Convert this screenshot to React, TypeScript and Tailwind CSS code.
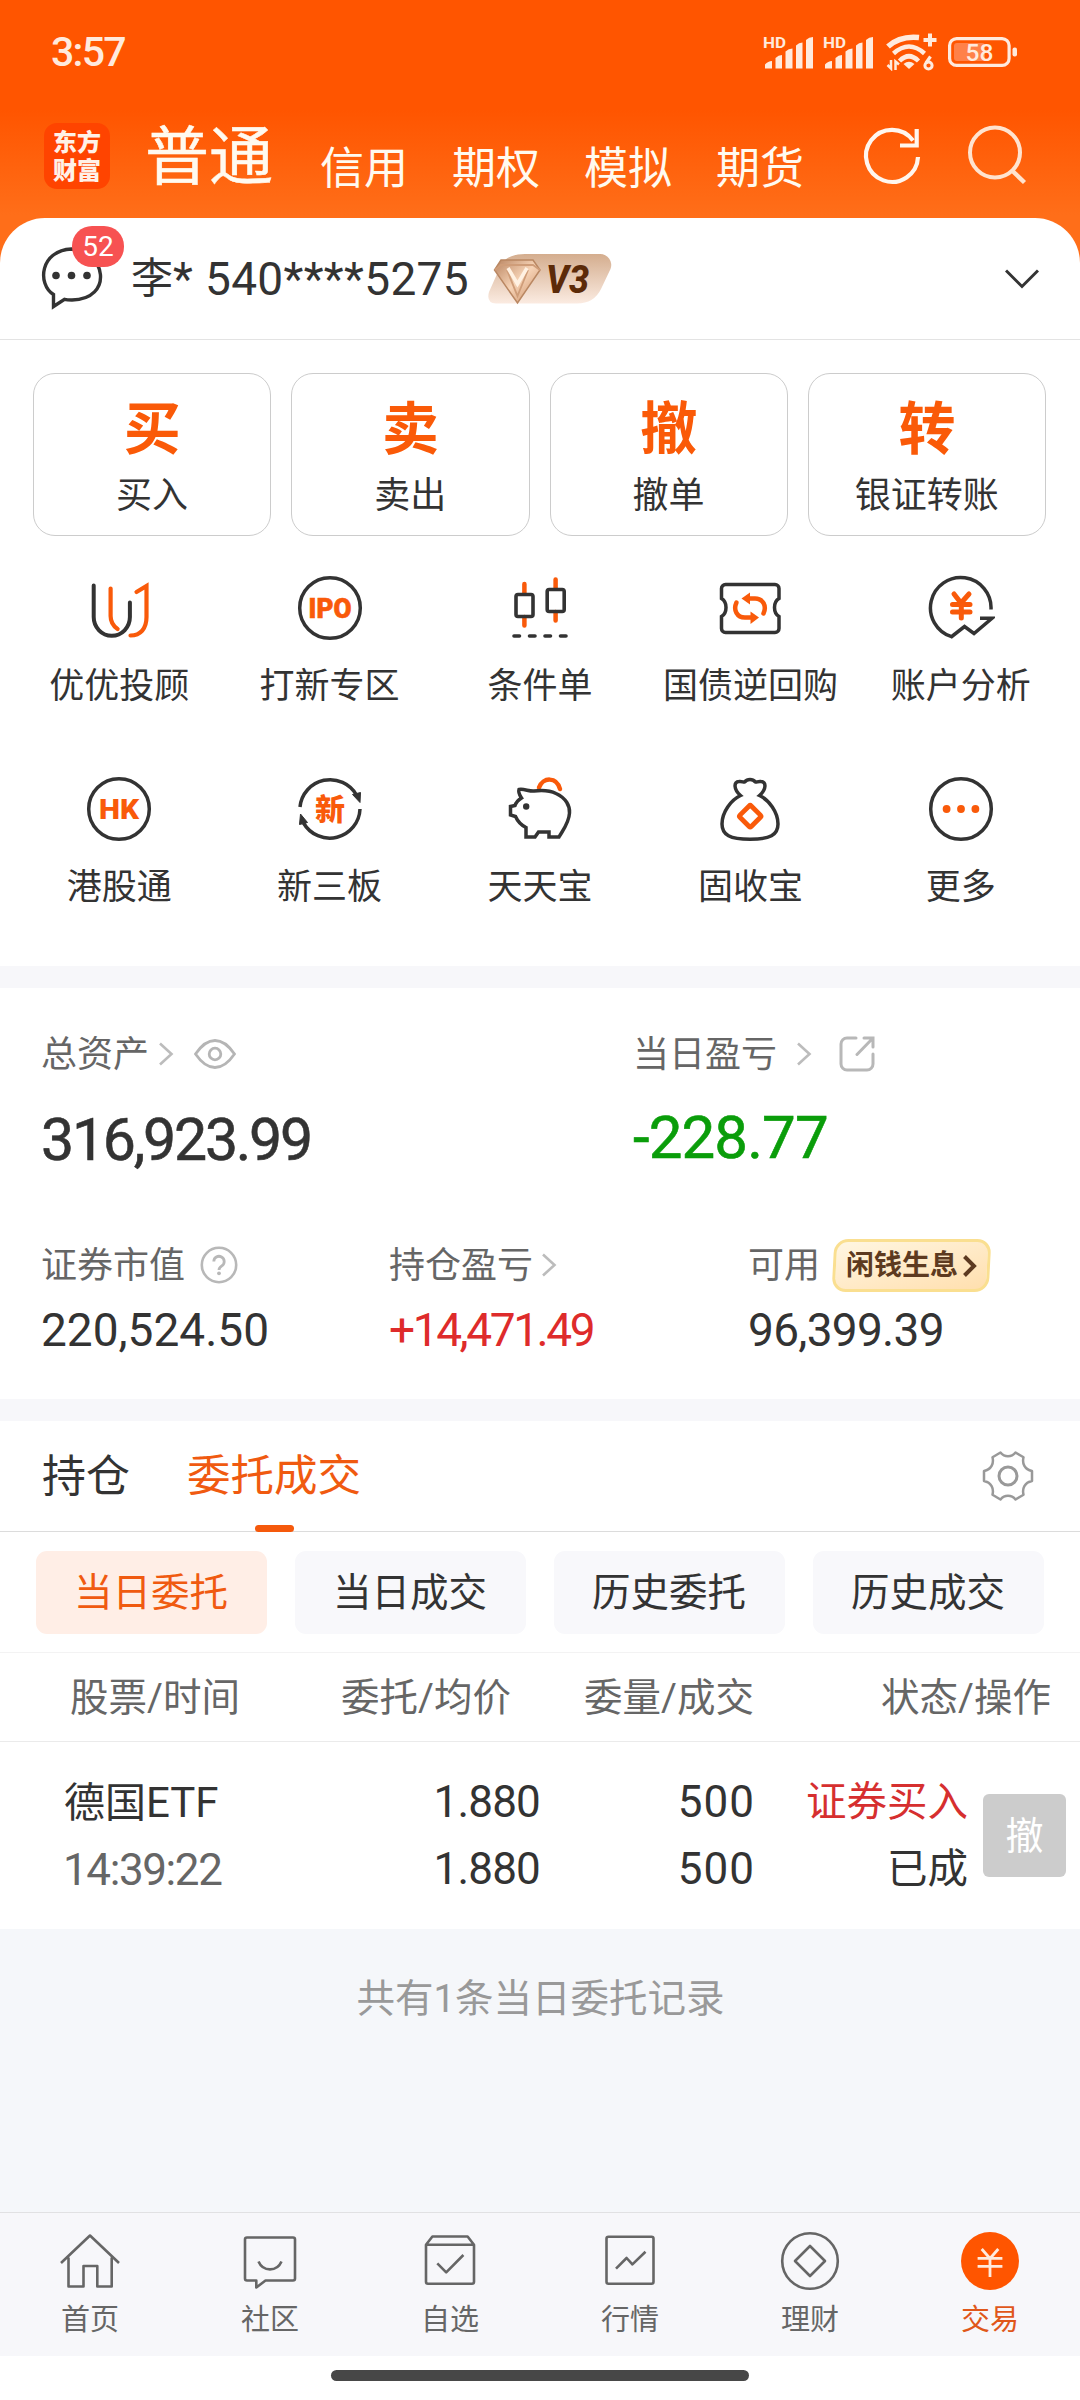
import React from 'react';

const DARK = '#333333';
const ORANGE = '#f95a0a';

/* ---------- status bar ---------- */

const Signal: React.FC = () => (
  <svg className="overflow-visible" width="52" height="38" viewBox="0 -4 52 38" fill="#ffeadd">
    <text x="0" y="12.500" fontSize="15" fontWeight="700" textLength="23" lengthAdjust="spacingAndGlyphs">HD</text>
    <path d="M2 33.500v-4q3-3.500 7-3.500v7.500z" />
    <path d="M12.500 33.500v-10.500q3-3 6.500-3v13.500z" />
    <path d="M22.500 33.500v-17q3-3 7-3v20z" />
    <path d="M33 33.500v-23q3-3 6.500-3v26z" />
    <path d="M43 33.500v-28.500q3-3 7-3v31.500z" />
  </svg>
);

const Wifi: React.FC = () => (
  <svg width="52" height="38" viewBox="0 0 52 38" fill="none" stroke="#ffeadd" strokeWidth="4.500">
    <path d="M2 13.500Q14 2.500 33 4.500" strokeWidth="5.500" />
    <path d="M7.500 20.500Q23 6.500 38.500 20.500" />
    <path d="M13.500 28Q23 18.500 32.500 28" />
    <path d="M17.500 31Q23 26.500 28.500 31L23 36z" fill="#ffeadd" stroke="none" />
    <path d="M44 0.500v13M37.500 7h13" strokeWidth="4" />
    <path d="M1.500 32l3.500 3.500v-8.500M9.500 37v-8.500l3.500 3" strokeWidth="2.500" />
    <path d="M44.500 23.500l-4.500 6.500" strokeWidth="3.200" />
    <circle cx="42.500" cy="32.500" r="3.600" strokeWidth="3" />
  </svg>
);

const Battery: React.FC = () => (
  <svg width="70" height="30" viewBox="0 0 70 30">
    <rect x="1.600" y="1.600" width="59.500" height="26.800" rx="7" fill="none" stroke="#ffeadd" strokeWidth="3.200" />
    <rect x="6" y="6" width="31" height="18" rx="3" fill="#ff8149" />
    <rect x="64.500" y="10.500" width="4.500" height="9" rx="2" fill="#ffeadd" />
    <text x="31.500" y="24" fontSize="24.500" fontWeight="500" textAnchor="middle" fill="#ffeadd">58</text>
  </svg>
);

/* ---------- small line icons ---------- */

const Chevron: React.FC<{ className?: string }> = ({ className }) => (
  <svg className={className} width="16" height="24" viewBox="0 0 16 24" fill="none" stroke="#bcbcbc" strokeWidth="2.600">
    <path d="M2 1.500L13.500 12L2 22.500" />
  </svg>
);

const Eye: React.FC = () => (
  <svg width="42" height="30" viewBox="0 0 42 30" fill="none" stroke="#b5b5b5" strokeWidth="2.800">
    <path d="M1.500 15C8 5.500 14 1.500 21 1.500S34 5.500 40.500 15C34 24.500 28 28.500 21 28.500S8 24.500 1.500 15z" />
    <circle cx="21" cy="15" r="5.800" />
  </svg>
);

const Share: React.FC = () => (
  <svg width="36" height="36" viewBox="0 0 36 36" fill="none" stroke="#b8b8b8" strokeWidth="3" strokeLinecap="round">
    <path d="M17 2H8a6 6 0 0 0-6 6v20a6 6 0 0 0 6 6h20a6 6 0 0 0 6-6V18" />
    <path d="M25 2h9v9M34 2L18 18.500" />
  </svg>
);

const Help: React.FC = () => (
  <svg width="38" height="38" viewBox="0 0 38 38" fill="none" stroke="#b8b8b8" strokeWidth="2.600">
    <circle cx="19" cy="19" r="17.200" />
    <path d="M13.800 15.500a5.200 5.200 0 1 1 8 4.400c-2 1.300-2.800 2.100-2.800 4" strokeWidth="2.800" />
    <circle cx="19" cy="27.300" r="1.900" fill="#b8b8b8" stroke="none" />
  </svg>
);

const Gear: React.FC = () => (
  <svg width="52" height="52" viewBox="0 0 52 52" fill="none" stroke="#999999" strokeWidth="2.500" strokeLinejoin="round">
    <path d="M18.500 2.500C22.500 7.500 29.500 7.500 33.500 2.500L41.500 7.300C40 13.500 42.500 19.500 50 21V31C42.500 32.500 40 38.500 41.500 44.700L33.500 49.500C29.500 44.500 22.500 44.500 18.500 49.500L10.500 44.700C12 38.500 9.500 32.500 2 31V21C9.500 19.500 12 13.500 10.500 7.300z" />
    <circle cx="26" cy="26" r="9" strokeWidth="3" />
  </svg>
);

/* ---------- shortcut icons, all on a 68 box ---------- */

const Icon68: React.FC<{ children: React.ReactNode }> = ({ children }) => (
  <svg width="68" height="68" viewBox="0 0 68 68" fill="none" stroke={DARK} strokeWidth="3.500">
    {children}
  </svg>
);

const AdvisorIcon = () => (
  <Icon68>
    <path d="M8.700 11.500V43a18.100 18.800 0 0 0 36.200 0V28.500" strokeWidth="4" strokeLinecap="round" />
    <path d="M25.600 14.500V42c0 6 2.500 10 7 13" stroke={ORANGE} strokeWidth="4.200" strokeLinecap="round" />
    <path d="M51.500 18L61.500 12V43c0 11.500-6 18.500-16 18.500" stroke={ORANGE} strokeWidth="4.200" strokeLinecap="round" />
  </Icon68>
);

const IpoIcon = () => (
  <Icon68>
    <circle cx="34" cy="34" r="30.300" />
    <text x="12.500" y="44" fontSize="28" fontWeight="900" textLength="43" lengthAdjust="spacingAndGlyphs" fill={ORANGE} stroke={ORANGE} strokeWidth="0.600">IPO</text>
  </Icon68>
);

const CandleIcon = () => (
  <Icon68>
    <path d="M18.400 10V19M18.400 43V51.500M49.600 5.500V14M49.600 38V46.500" stroke={ORANGE} strokeWidth="4.500" strokeLinecap="round" />
    <rect x="10" y="20.500" width="17" height="22" rx="2" strokeWidth="3.600" />
    <rect x="41.200" y="15.500" width="17" height="22" rx="2" strokeWidth="3.600" />
    <path d="M8 62H13.500M23.500 62H29M39 62H44.500M54.500 62H60" strokeWidth="3.600" strokeLinecap="round" />
  </Icon68>
);

const RepoIcon = () => (
  <Icon68>
    <path d="M9.500 10.500H59a4 4 0 0 1 4 4V24.500C57 28 57 39 63 42.500V54.500a4 4 0 0 1-4 4H9.500a4 4 0 0 1-4-4V42.500C11.500 39 11.500 28 5.500 24.500V14.500a4 4 0 0 1 4-4z" />
    <path d="M20.500 28.500C17 36 21 43.500 29 43.500H36" stroke={ORANGE} strokeWidth="4.500" strokeLinecap="round" />
    <path d="M47.500 39.500C51 32 47 24.500 39 24.500H32" stroke={ORANGE} strokeWidth="4.500" strokeLinecap="round" />
    <path d="M34.500 37.500L43 43.500L34.500 50z" fill={ORANGE} stroke="none" />
    <path d="M34 18.500L25.500 24.500L34 30.500z" fill={ORANGE} stroke="none" />
  </Icon68>
);

const AnalysisIcon = () => (
  <Icon68>
    <path d="M64 35.500A30.300 30.300 0 1 0 24.500 62.700L37.500 52.500L47 59.500L65 44.300H53" />
    <path d="M27 20L34 29L42 20M25.500 30.500H43M25.500 38H43M34.300 30V44" stroke={ORANGE} strokeWidth="5" strokeLinecap="round" />
  </Icon68>
);

const HkIcon = () => (
  <Icon68>
    <circle cx="34" cy="34" r="30.300" />
    <text x="14" y="44" fontSize="28" fontWeight="900" textLength="40" lengthAdjust="spacingAndGlyphs" fill={ORANGE} stroke="none">HK</text>
  </Icon68>
);

const NewBoardIcon = () => (
  <Icon68>
    <path d="M4 32A30.300 30.300 0 0 1 60.500 20M64 34A30.300 30.300 0 0 1 7.500 48" />
    <path d="M56.500 19.500L64.500 17.500L64 27.500z M11.500 47.500L3.500 49.500L4.500 39z" fill={DARK} stroke={DARK} strokeWidth="1" />
    <text x="34" y="44.500" fontSize="30" fontWeight="900" textAnchor="middle" fill={ORANGE} stroke="none">新</text>
  </Icon68>
);

const PigIcon = () => (
  <Icon68>
    <g transform="translate(1 0)">
      <path d="M32 12.500C36 2 49.500 1.500 53 14" stroke={ORANGE} strokeWidth="4.500" strokeLinecap="round" />
      <path d="M12 14.500C17 13.500 22 16.500 27 16C35 15 43 15.500 49 18.500C59 23 63 31 62.500 38C62 48 56 55 52 62H42V57H31.500L28 62H19V52.500C14 50 10.500 46 8.500 41.500L3.500 40V31.500L8 30.500C9 27.500 12 24.500 14.500 23C12.500 20 11 17.500 12 14.500z" />
      <circle cx="19.200" cy="31.500" r="3.200" fill={DARK} stroke="none" />
    </g>
  </Icon68>
);

const BagIcon = () => (
  <Icon68>
    <path d="M24.500 20.500C17.500 14.500 17.500 6.500 23 6.500C26 6 27.500 7.500 28.500 7C31.500 3.500 36.500 3.500 39.500 7C40.500 7.500 42 6 45 6.500C50.500 6.500 50.500 14.500 43.500 20.500C53 25 62 37 62 49C62 60 54 64.300 34 64.300S6 60 6 49C6 37 15 25 24.500 20.500z" />
    <rect x="26.200" y="33.200" width="16" height="16" rx="1.500" transform="rotate(45 34.200 41.200)" stroke={ORANGE} strokeWidth="4.800" />
  </Icon68>
);

const MoreIcon = () => (
  <Icon68>
    <circle cx="34" cy="34" r="30.300" />
    <g fill={ORANGE} stroke="none">
      <circle cx="19.600" cy="34" r="3.900" />
      <circle cx="34" cy="34" r="3.900" />
      <circle cx="48.400" cy="34" r="3.900" />
    </g>
  </Icon68>
);

/* ---------- bottom tab icons, on a 64 box ---------- */

const Icon64: React.FC<{ children: React.ReactNode }> = ({ children }) => (
  <svg width="64" height="64" viewBox="0 0 64 64" fill="none" stroke="#666666" strokeWidth="2.600" strokeLinejoin="round">
    {children}
  </svg>
);

const HomeIcon = () => (
  <Icon64>
    <path d="M3 34L32 6.500L61 34M10.500 28.500V57.500H25.500V37H39.300V57.500H53.700V28.500" />
  </Icon64>
);

const CommunityIcon = () => (
  <Icon64>
    <path d="M9 8.500H55a2 2 0 0 1 2 2V49.500a2 2 0 0 1-2 2H27.500L18.300 58.500V51.500H9a2 2 0 0 1-2-2V10.500a2 2 0 0 1 2-2z" />
    <path d="M20.500 32.500C25 43 39 43 43.500 32.500" />
  </Icon64>
);

const WatchIcon = () => (
  <Icon64>
    <path d="M8 15.700L14.400 7.500H49.600L56 15.700V52.700a2 2 0 0 1-2 2H10a2 2 0 0 1-2-2zM8 15.700H56" />
    <path d="M19.300 34.400L28.200 43.400L45.400 26" />
  </Icon64>
);

const MarketIcon = () => (
  <Icon64>
    <rect x="8.500" y="7.700" width="47" height="47" rx="2" />
    <path d="M18 39.700L28.600 29L34.400 35.400L47.500 22.700" />
  </Icon64>
);

const FinanceIcon = () => (
  <Icon64>
    <circle cx="32" cy="32" r="27.800" />
    <path d="M32 17L47 32L32 47L17 32z" />
  </Icon64>
);

const TradeIcon = () => (
  <Icon64>
    <circle cx="32" cy="32" r="29" fill="#ff5500" stroke="none" />
    <path d="M23.700 20L32 29.500L40.300 20M19.600 29.300H44.400M19.600 37.300H44.400M32 29V48" stroke="#ffeadd" strokeWidth="2.800" />
  </Icon64>
);

/* ---------- data ---------- */

const markets = ['信用', '期权', '模拟', '期货'];

const mainActions = [
  { glyph: '买', label: '买入' },
  { glyph: '卖', label: '卖出' },
  { glyph: '撤', label: '撤单' },
  { glyph: '转', label: '银证转账' },
];

const shortcuts = [
  { label: '优优投顾', icon: <AdvisorIcon /> },
  { label: '打新专区', icon: <IpoIcon /> },
  { label: '条件单', icon: <CandleIcon /> },
  { label: '国债逆回购', icon: <RepoIcon /> },
  { label: '账户分析', icon: <AnalysisIcon /> },
  { label: '港股通', icon: <HkIcon /> },
  { label: '新三板', icon: <NewBoardIcon /> },
  { label: '天天宝', icon: <PigIcon /> },
  { label: '固收宝', icon: <BagIcon /> },
  { label: '更多', icon: <MoreIcon /> },
];

const filters = ['当日委托', '当日成交', '历史委托', '历史成交'];

const navItems = [
  { label: '首页', icon: <HomeIcon /> },
  { label: '社区', icon: <CommunityIcon /> },
  { label: '自选', icon: <WatchIcon /> },
  { label: '行情', icon: <MarketIcon /> },
  { label: '理财', icon: <FinanceIcon /> },
  { label: '交易', icon: <TradeIcon />, active: true },
];

/* ---------- sections ---------- */

const Header: React.FC = () => (
  <header className="bg-[linear-gradient(to_bottom,#ff5500_0px,#ff5500_110px,#ff6e19_215px,#ff6e19_270px)]">
    <div className="flex h-[104px] items-center pl-[51px] pr-[62px] text-[#ffeadd]">
      <span className="text-[41px] font-medium leading-none tracking-[-1.700px]">3:57</span>
      <div className="ml-auto flex items-center">
        <div className="-mt-1 flex gap-2">
          <Signal />
          <Signal />
        </div>
        <div className="w-[11px]" />
        <Wifi />
        <div className="w-[10px]" />
        <Battery />
      </div>
    </div>

    <div className="flex h-[104px] items-center pl-11 text-white">
      <div className="flex h-[66px] w-[66px] flex-col items-center justify-center rounded-[13px] bg-[#ff4400] pt-[2px] text-2xl font-black leading-[28px] text-[#fff1e8]">
        <span>东方</span>
        <span>财富</span>
      </div>
      <span className="ml-[35px] pt-[3px] text-[64px] leading-none text-[#fffaf0] [-webkit-text-stroke:0.500px_#fffaf0]">普通</span>
      <div className="ml-[47px] flex gap-11 pt-[25px]">
        {markets.map(m => (
          <span key={m} className="text-[44px] leading-none text-[#fffaf0]">{m}</span>
        ))}
      </div>
      <svg className="ml-14" width="64" height="64" viewBox="0 0 64 64" fill="none" stroke="#fff6ee" strokeWidth="4.200">
        <path d="M58 33A26 26 0 1 1 53 16.500" />
        <path d="M40 21.500H56.700V5" />
      </svg>
      <svg className="ml-10" width="64" height="64" viewBox="0 0 64 64" fill="none" stroke="#ffe3cf" strokeWidth="4">
        <circle cx="31" cy="28.500" r="25" />
        <path d="M47.500 46L60.500 58.500" strokeWidth="4.500" />
      </svg>
    </div>

    <div className="mt-[10px] flex h-[122px] items-center rounded-t-[45px] border-b border-[#e3e3e3] bg-white pl-10 pr-[41px]">
      <div className="relative h-[64px] w-[64px]">
        <svg className="absolute left-0 top-0" width="64" height="64" viewBox="0 0 64 64" fill="none" stroke={DARK} strokeWidth="3.400">
          <path d="M13.500 59.500V47.500C-3 37 0 3.500 31.500 2C66 3.500 74 52 32 53C29 53 27 53 24.500 52.300z" />
          <g fill={DARK} stroke="none">
            <circle cx="16" cy="28.500" r="3.800" />
            <circle cx="31.500" cy="28.500" r="3.800" />
            <circle cx="47" cy="28.500" r="3.800" />
          </g>
        </svg>
        <span className="absolute left-8 -top-[21px] flex h-[41px] w-[52px] items-center justify-center rounded-[20px] bg-[#f75252] pt-px text-[28px] leading-none text-white">52</span>
      </div>
      <div className="ml-[27px] flex items-center whitespace-pre leading-none text-[#333]">
        <span className="text-[42px]">李</span>
        <span className="text-[46px] leading-none tracking-[0.350px]">* 540****5275</span>
      </div>
      <svg className="ml-[18px]" width="126" height="52" viewBox="0 0 126 52">
        <defs>
          <linearGradient id="vip" x1="0" y1="0" x2="0" y2="1">
            <stop offset="0" stopColor="#d4ad8e" />
            <stop offset="1" stopColor="#fbebe1" />
          </linearGradient>
          <linearGradient id="gem" x1="0" y1="0" x2="1" y2="1">
            <stop offset="0" stopColor="#b98460" />
            <stop offset="0.5" stopColor="#f6d3b6" />
            <stop offset="1" stopColor="#c98b61" />
          </linearGradient>
        </defs>
        <path d="M38 1H113a11 11 0 0 1 10.500 15L114 36Q107 50.500 90 50.500H9Q-1 50 2 39L14 12Q20 1 38 1z" fill="url(#vip)" />
        <path d="M14 7H46L53 17L30.500 50L7.500 17z" fill="url(#gem)" stroke="#b98762" strokeWidth="1.500" />
        <path d="M8 17L14 12H46L53 17M20 17L30.500 43L41 17" fill="none" stroke="#cf9d79" strokeWidth="1.800" />
        <path d="M21 15L30.500 31L40 15" fill="none" stroke="#fff1e2" strokeWidth="3.500" />
        <text x="59" y="39.500" fontSize="39" fontWeight="800" fontStyle="italic" textLength="43" lengthAdjust="spacingAndGlyphs" fill="#5c2a08">V3</text>
      </svg>
      <svg className="ml-auto" width="34" height="20" viewBox="0 0 34 20" fill="none" stroke={DARK} strokeWidth="3">
        <path d="M1 1.500L17 17.500L33 1.500" />
      </svg>
    </div>
  </header>
);

const Actions: React.FC = () => (
  <section className="h-[626px] pt-[33px]">
    <div className="grid grid-cols-4 gap-5 pl-[33px] pr-[34px]">
      {mainActions.map(a => (
        <div key={a.label} className="flex h-[163px] flex-col items-center rounded-[22px] border border-[#cccccc] pt-[27px]">
          <span className="text-[57px] font-bold leading-none text-[#fa5a08]">{a.glyph}</span>
          <span className="mt-[20px] text-[36px] leading-none text-[#333]">{a.label}</span>
        </div>
      ))}
    </div>
    <div className="mt-[38px] grid grid-cols-5 px-[14px]">
      {shortcuts.map(s => (
        <div key={s.label} className="flex h-[201px] flex-col items-center">
          {s.icon}
          <span className="mt-[27px] text-[35px] leading-none text-[#333]">{s.label}</span>
        </div>
      ))}
    </div>
  </section>
);

const Assets: React.FC = () => (
  <section className="h-[411px] pt-[47px] text-[#666]">
    <div className="flex pl-[41px]">
      <div className="w-[592px]">
        <div className="flex h-[38px] items-center">
          <span className="pt-[2px] text-[36px] leading-none">总资产</span>
          <Chevron className="ml-[9px]" />
          <div className="w-5" />
          <Eye />
        </div>
        <div className="mt-[37px] text-[59px] leading-none tracking-[-2.250px] text-[#333] [-webkit-text-stroke:0.600px_#333]">316,923.99</div>
      </div>
      <div>
        <div className="flex h-[38px] items-center">
          <span className="pt-[2px] text-[36px] leading-none">当日盈亏</span>
          <Chevron className="ml-[19px]" />
          <div className="w-[27px]" />
          <Share />
        </div>
        <div className="mt-[35px] text-[60px] leading-none tracking-[-0.900px] text-[#0a9d0a] [-webkit-text-stroke:0.600px_#0a9d0a]">-228.77</div>
      </div>
    </div>
    <div className="mt-[70px] flex pl-[41px]">
      <div className="w-[348px]">
        <div className="flex h-[52px] items-center">
          <span className="pt-[2px] text-[36px] leading-none">证券市值</span>
          <div className="w-[15px]" />
          <Help />
        </div>
        <div className="mt-[16px] text-[46px] leading-none text-[#333]">220,524.50</div>
      </div>
      <div className="w-[359px]">
        <div className="flex h-[52px] items-center">
          <span className="pt-[2px] text-[36px] leading-none">持仓盈亏</span>
          <Chevron className="ml-2" />
        </div>
        <div className="mt-[16px] text-[46px] leading-none tracking-[-2.400px] text-[#de2b2b]">+14,471.49</div>
      </div>
      <div>
        <div className="flex h-[52px] items-center">
          <span className="pt-[2px] text-[36px] leading-none">可用</span>
          <div className="ml-[13px] flex h-[53px] w-[157px] -skew-x-3 items-center justify-center rounded-[14px] border-[3px] border-[#fadf90] bg-linear-to-br from-[#fff6e2] to-[#ffdfae] text-[28px] font-bold leading-none text-[#5d3a20]">
            <span className="skew-x-3 pt-px">闲钱生息</span>
            <svg className="ml-1 skew-x-3" width="14" height="22" viewBox="0 0 14 22" fill="none" stroke="#5d3a20" strokeWidth="4">
              <path d="M1.500 1.500L11 11L1.500 20.500" />
            </svg>
          </div>
        </div>
        <div className="mt-[16px] text-[46px] leading-none tracking-[-0.700px] text-[#333]">96,399.39</div>
      </div>
    </div>
  </section>
);

const Orders: React.FC = () => (
  <section>
    <div className="flex h-[111px] items-center border-b border-[#dcdcdc] pl-[42px] pr-[46px]">
      <span className="pt-[2px] text-[44px] leading-none text-[#333]">持仓</span>
      <div className="relative ml-[57px] flex h-full items-center">
        <span className="pt-[2px] text-[43.500px] leading-none text-[#f05a10]">委托成交</span>
        <span className="absolute -bottom-px left-[68px] h-[7px] w-[39px] rounded-full bg-[#f5590c]" />
      </div>
      <div className="ml-auto">
        <Gear />
      </div>
    </div>

    <div className="flex h-[121px] gap-7 border-b border-[#f3f3f3] px-9 pt-[19px]">
      {filters.map((f, i) => (
        <div
          key={f}
          className={`flex h-[83px] w-[231px] items-center justify-center rounded-[11px] pr-px pt-px text-[38.500px] leading-none ${
            i === 0 ? 'bg-[#ffeee6] text-[#f05a10]' : 'bg-[#f8f8fb] text-[#333]'
          }`}
        >
          {f}
        </div>
      ))}
    </div>

    <div className="flex h-[89px] items-center border-b border-[#ebebeb] pr-[29px] pt-[3px] text-[38.500px] leading-none text-[#666]">
      <span className="w-[240px] text-right">股票/时间</span>
      <span className="w-[271px] text-right">委托/均价</span>
      <span className="w-[243px] text-right">委量/成交</span>
      <span className="ml-auto">状态/操作</span>
    </div>

    <div className="flex h-[187px] items-center pl-[64px] text-[44px] leading-[67px] text-[#333]">
      <div className="w-[201px] pt-px">
        <div className="whitespace-nowrap text-[41px] leading-[67px]">德国<span className="text-[42px]">ETF</span></div>
        <div className="-ml-px tracking-[-1.400px] text-[#666]">14:39:22</div>
      </div>
      <div className="w-[275px] pt-px text-right tracking-[-0.800px]">
        <div>1.880</div>
        <div>1.880</div>
      </div>
      <div className="w-[215px] pt-px text-right tracking-[1px]">
        <div>500</div>
        <div>500</div>
      </div>
      <div className="w-[213px] pt-px text-right text-[40.500px] leading-[67px]">
        <div className="text-[#d62f2f]">证券买入</div>
        <div>已成</div>
      </div>
      <div className="ml-[15px] flex h-[83px] w-[83px] items-center justify-center rounded-md bg-[#cccccc] text-[38px] leading-none text-white">撤</div>
    </div>
  </section>
);

const BottomNav: React.FC = () => (
  <nav className="grid h-[144px] grid-cols-6 border-t border-[#e1e1e3] bg-[#f7f7fa] pt-4">
    {navItems.map(n => (
      <div key={n.label} className="flex flex-col items-center">
        {n.icon}
        <span className={`mt-[13px] text-[29px] leading-none ${n.active ? 'text-[#e0571a]' : 'text-[#666]'}`}>{n.label}</span>
      </div>
    ))}
  </nav>
);

const App: React.FC = () => (
  <div className="flex h-[2400px] w-[1080px] flex-col overflow-hidden bg-white font-['Roboto','Noto_Sans_CJK_SC',sans-serif]">
    <Header />
    <Actions />
    <div className="h-[22px] bg-[#f7f7fa]" />
    <Assets />
    <div className="h-[22px] bg-[#f7f7fa]" />
    <Orders />
    <div className="flex-1 bg-[#f5f7fa] pl-px pt-[51px] text-center text-[38.500px] leading-none text-[#999]">
      共有1条当日委托记录
    </div>
    <BottomNav />
    <div className="flex h-11 justify-center pt-[14px]">
      <div className="h-[11px] w-[418px] rounded-full bg-[#474747]" />
    </div>
  </div>
);

export default App;
